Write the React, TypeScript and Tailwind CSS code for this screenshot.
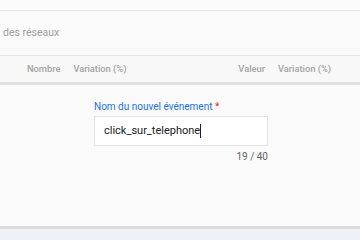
export default function App() {
  return (
    <div className="w-[360px] h-[240px] overflow-hidden bg-[#fafafa] flex flex-col font-['Roboto',sans-serif]">
      <div className="h-[11px] shrink-0 border-b border-[#e3e3e3] bg-[#fbfbfb]" />
      <div className="h-[44px] shrink-0 flex items-center pl-[3px] text-[10.5px] text-[#a0a0a0] bg-[#fafafa]">
        des réseaux
      </div>
      <div className="h-[27px] shrink-0 border-t border-[#e6e6e6] flex items-center text-[9.3px] font-medium text-[#a4a4a4] bg-[#f8f8f8]">
        <span className="ml-[27px]">Nombre</span>
        <span className="ml-[13px]">Variation (%)</span>
        <span className="ml-auto">Valeur</span>
        <span className="ml-[13px] mr-[29px]">Variation (%)</span>
      </div>
      <div className="h-[3px] shrink-0 bg-[#e0e0e0] shadow-[0_1px_2px_rgba(0,0,0,0.12)]" />
      <div className="flex-1 bg-[#fafafa] pt-[16px]">
        <div className="ml-[94px] w-[174px] flex flex-col">
          <div className="text-[10px] text-[#1a73e8] leading-[12px]">
            Nom du nouvel événement <span className="text-[#d93025]">*</span>
          </div>
          <div className="mt-[3px] h-[30px] bg-white border border-[#e4e4e4] flex items-center pl-[9px] text-[11px] text-[#202124]">
            click_sur_telephone
            <span className="w-px h-[14px] bg-[#202124]" />
          </div>
          <div className="mt-[5px] self-end text-[10px] leading-[12px] text-[#5f6368]">19 / 40</div>
        </div>
      </div>
      <div className="h-[3px] shrink-0 bg-[#dcdcdc] shadow-[0_1px_2px_rgba(0,0,0,0.12)]" />
      <div className="h-[11px] shrink-0 bg-[#eef2f6]" />
    </div>
  );
}
